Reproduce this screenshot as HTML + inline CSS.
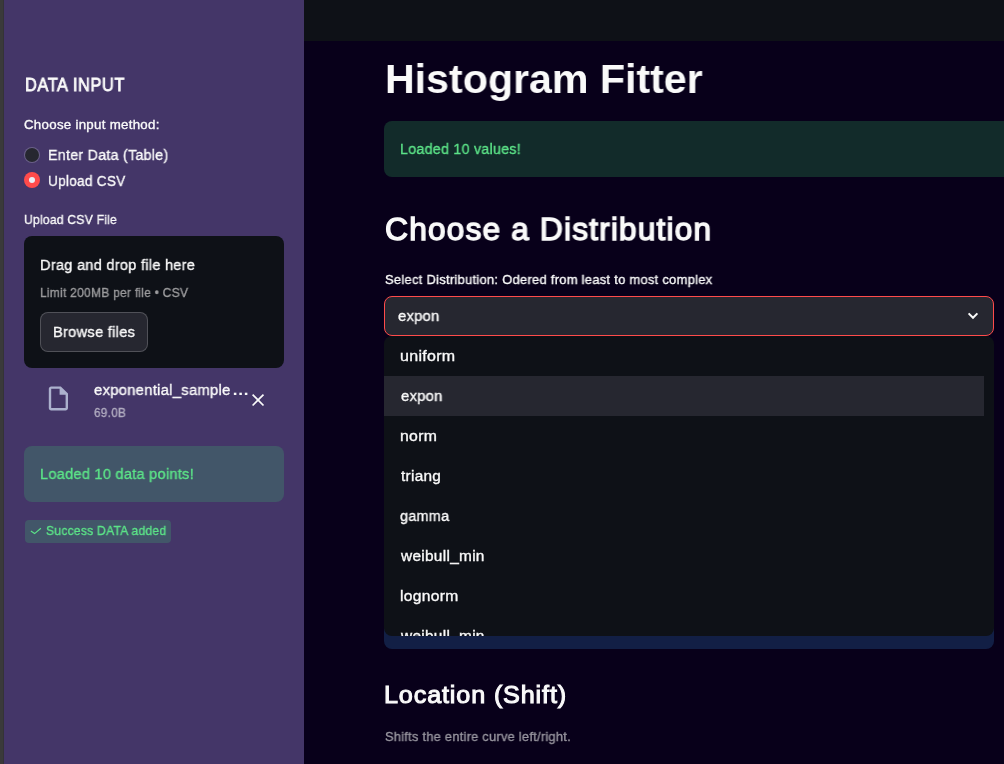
<!DOCTYPE html>
<html lang="en">
<head>
<meta charset="utf-8">
<title>Histogram Fitter</title>
<style>
*{box-sizing:border-box;margin:0;padding:0}
html,body{width:1004px;height:764px;overflow:hidden;background:#08001a;font-family:"Liberation Sans",sans-serif;}
.abs{position:absolute}
.tx{position:absolute;white-space:nowrap;line-height:1;transform-origin:0 0;will-change:transform;-webkit-text-stroke:0.35px currentColor;}
#edge{left:0;top:0;width:4px;height:764px;background:#3a3a3a;border-right:1px solid #343337}
#sidebar{left:4px;top:0;width:300px;height:764px;background:#443668}
#header{left:304px;top:0;width:700px;height:41px;background:#0e1117}
#drop{left:24px;top:236px;width:260px;height:132px;border-radius:8px;background:#0e1117}
#browse{left:40px;top:312px;width:108px;height:40px;border-radius:8px;background:#262730;border:1px solid rgba(250,250,250,0.2)}
.radio{width:16px;height:16px;border-radius:50%}
#r1{left:24px;top:147px;background:#6a6088}
#r1 i{position:absolute;left:1px;top:1px;width:14px;height:14px;border-radius:50%;background:#262730}
#r2{left:24px;top:172px;background:#ff4b4b}
#r2 i{position:absolute;left:5px;top:5px;width:6px;height:6px;border-radius:50%;background:#e9eff5}
#salert{left:24px;top:446px;width:260px;height:56px;border-radius:8px;background:rgba(61,213,109,0.2)}
#badge{left:25px;top:520px;width:146px;height:23px;border-radius:4px;background:rgba(61,213,109,0.2)}
#malert{left:384px;top:121px;width:640px;height:56px;border-radius:8px;background:rgba(61,213,109,0.2)}
#select{left:384px;top:296px;width:610px;height:40px;border-radius:8px;background:#262730;border:1px solid #ff4b4b}
#info{left:384px;top:560px;width:610px;height:88.5px;border-radius:8px;background:rgba(61,157,243,0.2)}
#dd{left:384px;top:336px;width:610px;height:300px;border-radius:8px;background:#0e1117;overflow:hidden}
#hl{left:0;top:40px;width:600px;height:40px;background:#262730}
</style>
</head>
<body>
<div id="sidebar" class="abs"></div>
<div id="edge" class="abs"></div>
<div id="header" class="abs"></div>

<!-- sidebar content -->
<div class="tx" style="left:24.99px;top:77px;font-size:17.77px;font-weight:400;color:#fafafa;-webkit-text-stroke-width:0.8px;letter-spacing:0.64px;transform:scaleX(0.9215)">DATA INPUT</div>
<div class="tx" style="left:24.15px;top:118px;font-size:13.16px;font-weight:400;color:#fafafa;letter-spacing:0.28px;transform:scaleX(1.0096)">Choose input method:</div>
<div id="r1" class="abs radio"><i></i></div>
<div class="tx" style="left:47.95px;top:147px;font-size:15.04px;font-weight:400;color:#fafafa;letter-spacing:0.28px;transform:scaleX(0.9481)">Enter Data (Table)</div>
<div id="r2" class="abs radio"><i></i></div>
<div class="tx" style="left:48.21px;top:173px;font-size:15.04px;font-weight:400;color:#fafafa;letter-spacing:0.28px;transform:scaleX(0.9060)">Upload CSV</div>
<div class="tx" style="left:24.01px;top:213px;font-size:13.16px;font-weight:400;color:#fafafa;letter-spacing:0.28px;transform:scaleX(0.9172)">Upload CSV File</div>
<div id="drop" class="abs"></div>
<div class="tx" style="left:39.93px;top:257px;font-size:15.04px;font-weight:400;color:#fafafa;letter-spacing:0.28px;transform:scaleX(0.9687)">Drag and drop file here</div>
<div class="tx" style="left:39.92px;top:286px;font-size:13.16px;font-weight:400;color:#9c9c9e;letter-spacing:0.28px;transform:scaleX(0.9118)">Limit 200MB per file • CSV</div>
<div id="browse" class="abs"></div>
<div class="tx" style="left:52.93px;top:324px;font-size:15.04px;font-weight:400;color:#fafafa;letter-spacing:0.28px;transform:scaleX(0.9739)">Browse files</div>
<svg class="abs" style="left:44px;top:384px" width="28.8" height="28.8" viewBox="0 0 24 24"><path fill="#acb1cd" d="M14 2H6c-1.1 0-1.99.9-1.99 2L4 20c0 1.1.89 2 1.99 2H18c1.1 0 2-.9 2-2V8l-6-6zM6 20V4h7v5h5v11H6z"/></svg>
<div class="tx" style="left:93.51px;top:382px;font-size:15.04px;font-weight:400;color:#fafafa;letter-spacing:0.28px;transform:scaleX(0.9847)">exponential_sample</div>
<div class="tx" style="left:231.91px;top:382px;font-size:15.04px;font-weight:700;color:#fafafa;-webkit-text-stroke-width:0px;transform:scaleX(1.1489)">…</div>
<div class="tx" style="left:93.70px;top:406px;font-size:13.16px;font-weight:400;color:#b1acc0;letter-spacing:0.28px;transform:scaleX(0.8965)">69.0B</div>
<svg class="abs" style="left:240px;top:384px" width="32" height="32" viewBox="0 0 32 32"><g transform="translate(7.68 5.68) scale(0.864)"><path fill="#fafafa" d="M19 6.41L17.59 5 12 10.59 6.41 5 5 6.41 10.59 12 5 17.59 6.41 19 12 13.41 17.59 19 19 17.59 13.41 12z"/></g></svg>
<div id="salert" class="abs"></div>
<div class="tx" style="left:39.93px;top:466px;font-size:15.04px;font-weight:400;color:#5ce488;letter-spacing:0.28px;transform:scaleX(0.9673)">Loaded 10 data points!</div>
<div id="badge" class="abs"></div>
<svg class="abs" style="left:30px;top:524px" width="12" height="12" viewBox="0 0 12 12"><path d="M0.9 7.1 L4.6 9.6 L10.9 4.2" stroke="#5ce488" stroke-width="1.15" fill="none"/></svg>
<div class="tx" style="left:46.28px;top:524px;font-size:13.16px;font-weight:400;color:#5ce488;letter-spacing:0.28px;transform:scaleX(0.9186)">Success DATA added</div>

<!-- main content -->
<div class="tx" style="left:384.93px;top:59px;font-size:41.36px;font-weight:700;color:#fafafa;-webkit-text-stroke-width:0px;transform:scaleX(0.9948)">Histogram Fitter</div>
<div id="malert" class="abs"></div>
<div class="tx" style="left:400.25px;top:141px;font-size:15.04px;font-weight:400;color:#5ce488;letter-spacing:0.28px;transform:scaleX(0.9479)">Loaded 10 values!</div>
<div class="tx" style="left:385.31px;top:214px;font-size:31.87px;font-weight:400;color:#fafafa;-webkit-text-stroke-width:1.4px;letter-spacing:1.12px;transform:scaleX(0.9972)">Choose a Distribution</div>
<div class="tx" style="left:384.77px;top:273px;font-size:13.16px;font-weight:400;color:#fafafa;letter-spacing:0.28px;transform:scaleX(0.9828)">Select Distribution: Odered from least to most complex</div>
<div id="select" class="abs"></div>
<div class="tx" style="left:397.51px;top:308px;font-size:15.04px;font-weight:400;color:#fafafa;letter-spacing:0.28px;transform:scaleX(0.9797)">expon</div>
<svg class="abs" style="left:965px;top:308px" width="16" height="16" viewBox="0 0 16 16"><path d="M3.6 5.4 L8 9.8 L12.4 5.4" stroke="#fafafa" stroke-width="2" fill="none" stroke-linejoin="miter"/></svg>
<div id="info" class="abs"></div>
<div id="dd" class="abs">
<div id="hl" class="abs"></div>
<div class="tx" style="left:16.19px;top:12px;font-size:15.04px;color:#fafafa;letter-spacing:0.28px;transform:scaleX(1.0642)">uniform</div>
<div class="tx" style="left:16.61px;top:52px;font-size:15.04px;color:#fafafa;letter-spacing:0.28px;transform:scaleX(0.9822)">expon</div>
<div class="tx" style="left:16.20px;top:92px;font-size:15.04px;color:#fafafa;letter-spacing:0.28px;transform:scaleX(1.0522)">norm</div>
<div class="tx" style="left:16.98px;top:132px;font-size:15.04px;color:#fafafa;letter-spacing:0.28px;transform:scaleX(1.0226)">triang</div>
<div class="tx" style="left:16.32px;top:172px;font-size:15.04px;color:#fafafa;letter-spacing:0.28px;transform:scaleX(0.9562)">gamma</div>
<div class="tx" style="left:17.02px;top:212px;font-size:15.04px;color:#fafafa;letter-spacing:0.28px;transform:scaleX(1.0257)">weibull_min</div>
<div class="tx" style="left:16.20px;top:252px;font-size:15.04px;color:#fafafa;letter-spacing:0.28px;transform:scaleX(1.0394)">lognorm</div>
<div class="tx" style="left:17.02px;top:292px;font-size:15.04px;color:#fafafa;letter-spacing:0.28px;transform:scaleX(1.0257)">weibull_min</div>
</div>
<div class="tx" style="left:384.37px;top:683px;font-size:24.63px;font-weight:400;color:#fafafa;-webkit-text-stroke-width:1.05px;letter-spacing:0.84px;transform:scaleX(1.0221)">Location (Shift)</div>
<div class="tx" style="left:385.07px;top:730px;font-size:13.16px;font-weight:400;color:#9996a0;letter-spacing:0.28px;transform:scaleX(0.9727)">Shifts the entire curve left/right.</div>
</body>
</html>
